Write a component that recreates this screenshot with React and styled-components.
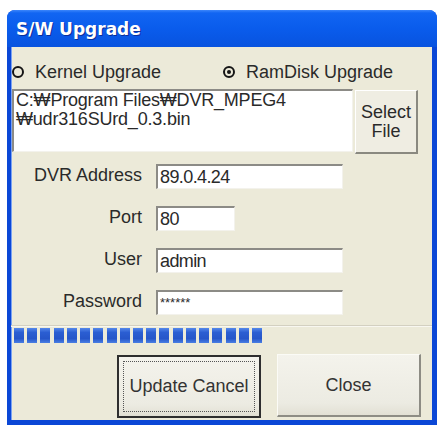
import styled, { createGlobalStyle } from "styled-components";

const GlobalStyle = createGlobalStyle`
  html, body {
    margin: 0;
    padding: 0;
    background: #ffffff;
  }
  body {
    font-family: "Liberation Sans", Arial, sans-serif;
  }
`;

const Window = styled.div`
  margin: 10px 0 0 7px;
  width: 430px;
  height: 415px;
  box-sizing: border-box;
  display: flex;
  flex-direction: column;
  background: #0b47d6;
  border-radius: 8px 8px 0 0;
  overflow: hidden;
`;

const TitleBar = styled.div`
  height: 37px;
  flex: none;
  display: flex;
  align-items: center;
  padding-left: 9px;
  background: linear-gradient(#3c86fb 0, #1165f2 3px, #0a5cec 50%, #0853df 100%);
  color: #ffffff;
  font-family: "DejaVu Sans", sans-serif;
  font-weight: bold;
  font-size: 17px;
  text-shadow: 1px 1px 0 #0a2f9a;
`;

const Body = styled.div`
  flex: 1;
  margin: 0 5px 5px 4px;
  background: #ecead9;
  box-shadow: inset 1px 0 0 #7aa2f2;
  display: flex;
  flex-direction: column;
  color: #2a2a2a;
  font-size: 18px;
`;

const RadioRow = styled.div`
  display: flex;
  align-items: center;
  height: 18px;
  margin-top: 16px;
  padding-left: 1px;
`;

const RadioItem = styled.label`
  display: flex;
  align-items: center;
  gap: 11px;
  width: ${({ $w }) => $w}px;
`;

const RadioDot = styled.span`
  flex: none;
  display: block;
  position: relative;
  width: 12px;
  height: 12px;
  box-sizing: border-box;
  border: 2.5px solid #151515;
  border-radius: 50%;
  &::after {
    content: "";
    position: absolute;
    left: 1.5px;
    top: 1.5px;
    width: 4px;
    height: 4px;
    border-radius: 50%;
    background: ${({ $on }) => ($on ? "#151515" : "transparent")};
  }
`;

const PathRow = styled.div`
  display: flex;
  align-items: flex-start;
  gap: 2px;
  margin-top: 8px;
  padding-left: 1px;
`;

const PathBox = styled.div`
  width: 341px;
  height: 63px;
  box-sizing: border-box;
  background: #ffffff;
  border-top: 2px solid #8c8b86;
  border-left: 2px solid #8c8b86;
  border-right: 1px solid #f3f2ec;
  border-bottom: 1px solid #f3f2ec;
  padding: 0 0 0 2px;
  line-height: 19px;
  letter-spacing: -0.2px;
`;

const SelectButton = styled.button`
  margin-top: 1px;
  width: 63px;
  height: 64px;
  box-sizing: border-box;
  background: #efede2;
  border-top: 1px solid #ffffff;
  border-left: 1px solid #ffffff;
  border-right: 2px solid #8a8980;
  border-bottom: 2px solid #8a8980;
  font-family: "Liberation Sans", Arial, sans-serif;
  font-size: 18px;
  line-height: 19px;
  color: #2a2a2a;
  padding: 0;
`;

const Form = styled.div`
  display: grid;
  grid-template-columns: 131px auto;
  column-gap: 14px;
  row-gap: 17px;
  margin-top: 10px;
  justify-items: start;
`;

const Label = styled.div`
  justify-self: end;
  padding-top: 2px;
  line-height: 18px;
`;

const Field = styled.div`
  width: ${({ $w }) => $w}px;
  height: 25px;
  box-sizing: border-box;
  background: #ffffff;
  border-top: 2px solid #8c8b86;
  border-left: 2px solid #8c8b86;
  border-right: 1px solid #f3f2ec;
  border-bottom: 1px solid #f3f2ec;
  padding-left: 2px;
  line-height: 22px;
  font-size: ${({ $small }) => ($small ? "13px" : "18px")};
  letter-spacing: ${({ $small }) => ($small ? "0" : "-0.6px")};
  white-space: nowrap;
`;

const Separator = styled.div`
  margin-top: 10px;
  height: 0;
  border-top: 1px solid #d3d0c1;
  border-bottom: 1px solid #f8f7f0;
`;

const Progress = styled.div`
  margin: 1px 0 0 3px;
  height: 15px;
  width: 248px;
  display: flex;
  justify-content: space-between;
`;

const Block = styled.span`
  width: 10px;
  height: 15px;
  background: linear-gradient(#5588ea, #2b5ed2 30%, #2656c9 70%, #4a7fe4);
`;

const ButtonRow = styled.div`
  display: flex;
  justify-content: flex-end;
  gap: 16px;
  margin: 11px 11px 0 0;
`;

const DialogButton = styled.button`
  position: relative;
  width: 144px;
  height: 63px;
  box-sizing: border-box;
  background: linear-gradient(#f4f3ec, #ecebe2 80%, #e2e0d4);
  font-family: "Liberation Sans", Arial, sans-serif;
  font-size: 18px;
  color: #333333;
  padding: 0;
  border-top: ${({ $default }) => ($default ? "2px solid #2e2e2e" : "1px solid #fbfbf6")};
  border-left: ${({ $default }) => ($default ? "2px solid #2e2e2e" : "1px solid #fbfbf6")};
  border-right: 2px solid ${({ $default }) => ($default ? "#2e2e2e" : "#8d8c84")};
  border-bottom: 2px solid ${({ $default }) => ($default ? "#2e2e2e" : "#8d8c84")};
  margin-top: ${({ $default }) => ($default ? "1px" : "0")};
  &::after {
    content: "";
    display: ${({ $default }) => ($default ? "block" : "none")};
    position: absolute;
    inset: 4px;
    border: 1px dotted #555555;
  }
`;

const blocks = Array.from({ length: 19 });

export default function App() {
  return (
    <>
      <GlobalStyle />
      <Window>
        <TitleBar>S/W Upgrade</TitleBar>
        <Body>
          <RadioRow>
            <RadioItem $w={211}>
              <RadioDot />
              Kernel Upgrade
            </RadioItem>
            <RadioItem $w={200}>
              <RadioDot $on />
              RamDisk Upgrade
            </RadioItem>
          </RadioRow>
          <PathRow>
            <PathBox>
              C:₩Program Files₩DVR_MPEG4
              <br />
              ₩udr316SUrd_0.3.bin
            </PathBox>
            <SelectButton>
              Select
              <br />
              File
            </SelectButton>
          </PathRow>
          <Form>
            <Label>DVR Address</Label>
            <Field $w={187}>89.0.4.24</Field>
            <Label>Port</Label>
            <Field $w={79}>80</Field>
            <Label>User</Label>
            <Field $w={187}>admin</Field>
            <Label>Password</Label>
            <Field $w={187} $small>
              ******
            </Field>
          </Form>
          <Separator />
          <Progress>
            {blocks.map((_, i) => (
              <Block key={i} />
            ))}
          </Progress>
          <ButtonRow>
            <DialogButton $default>Update Cancel</DialogButton>
            <DialogButton>Close</DialogButton>
          </ButtonRow>
        </Body>
      </Window>
    </>
  );
}
